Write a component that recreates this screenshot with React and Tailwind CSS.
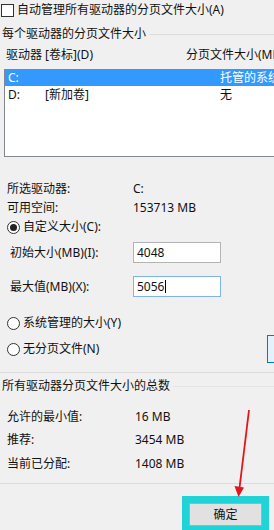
export default function App() {
  const Radio = ({ on }) => (
    <span className="flex h-[13px] w-[13px] shrink-0 items-center justify-center rounded-full border border-[#333] bg-white">
      {on && <span className="h-[7px] w-[7px] rounded-full bg-[#222]" />}
    </span>
  );
  return (
    <div className="relative h-[530px] w-[274px] overflow-hidden bg-[#f0f0f0] text-[12px] leading-none text-[#111] font-[family-name:'Noto_Sans',_'Noto_Sans_CJK_SC',_sans-serif]">
      {/* checkbox row */}
      <div className="flex h-[20px] items-center pl-[1px]">
        <span className="h-[13px] w-[13px] shrink-0 border border-[#333] bg-white" />
        <span className="ml-[3px] whitespace-nowrap">自动管理所有驱动器的分页文件大小(A)</span>
      </div>
      {/* group heading */}
      <div className="mt-[4px] flex h-[20px] items-center pl-[2px]">
        <span className="whitespace-nowrap">每个驱动器的分页文件大小</span>
        <span className="ml-[3px] h-px flex-1 bg-[#dcdcdc]" />
      </div>
      {/* column headers */}
      <div className="mt-[1px] flex h-[20px] items-center whitespace-nowrap">
        <span className="w-[186px] shrink-0 pl-[6px]">驱动器 [卷标](D)</span>
        <span className="shrink-0">分页文件大小(MB)</span>
      </div>
      {/* list box */}
      <div className="ml-[4px] mt-[4px] h-[88px] w-[300px] border border-[#828790] bg-white">
        <div className="flex h-[16px] items-center whitespace-nowrap bg-[#3399ff] text-white">
          <span className="w-[215px] shrink-0 pl-[3px]">C:</span>
          <span>托管的系统</span>
        </div>
        <div className="flex h-[17px] items-center whitespace-nowrap">
          <span className="w-[40px] shrink-0 pl-[3px]">D:</span>
          <span className="w-[175px] shrink-0">[新加卷]</span>
          <span>无</span>
        </div>
      </div>
      {/* info */}
      <div className="mt-[22px] flex h-[19px] items-center whitespace-nowrap">
        <span className="w-[133px] shrink-0 pl-[7px]">所选驱动器:</span>
        <span>C:</span>
      </div>
      <div className="flex h-[19px] items-center whitespace-nowrap">
        <span className="w-[133px] shrink-0 pl-[7px]">可用空间:</span>
        <span>153713 MB</span>
      </div>
      <div className="flex h-[20px] items-center gap-[3px] whitespace-nowrap pl-[7px]">
        <Radio on />
        <span>自定义大小(C):</span>
      </div>
      <div className="mt-[5px] flex h-[21px] items-center whitespace-nowrap">
        <span className="w-[133px] shrink-0 pl-[10px]">初始大小(MB)(I):</span>
        <div className="flex h-[21px] w-[88px] items-center border border-[#b4b4b4] bg-white pl-[3px]">4048</div>
      </div>
      <div className="mt-[13px] flex h-[21px] items-center whitespace-nowrap">
        <span className="w-[133px] shrink-0 pl-[10px]">最大值(MB)(X):</span>
        <div className="flex h-[21px] w-[88px] items-center border border-[#7eb4ea] bg-white pl-[3px]">
          5056<span className="ml-px h-[13px] w-px bg-black" />
        </div>
      </div>
      <div className="mt-[16px] flex h-[20px] items-center gap-[3px] whitespace-nowrap pl-[7px]">
        <Radio />
        <span>系统管理的大小(Y)</span>
      </div>
      <div className="mt-[2px] flex h-[28px] items-center whitespace-nowrap">
        <div className="flex w-[267px] shrink-0 items-center gap-[3px] pl-[7px]">
          <Radio />
          <span>无分页文件(N)</span>
        </div>
        <div className="h-[28px] w-[75px] shrink-0 border border-[#0078d7] bg-[#e5f1fb]" />
      </div>
      <div className="mt-[9px] h-px w-full bg-[#dcdcdc]" />
      {/* group 2 */}
      <div className="mt-[3px] flex h-[20px] items-center pl-[2px]">
        <span className="whitespace-nowrap">所有驱动器分页文件大小的总数</span>
        <span className="ml-[3px] h-px flex-1 bg-[#e4e4e4]" />
      </div>
      <div className="mt-[9px] flex h-[23px] items-center whitespace-nowrap">
        <span className="w-[135px] shrink-0 pl-[7px]">允许的最小值:</span>
        <span>16 MB</span>
      </div>
      <div className="flex h-[24px] items-center whitespace-nowrap">
        <span className="w-[135px] shrink-0 pl-[7px]">推荐:</span>
        <span>3454 MB</span>
      </div>
      <div className="flex h-[23px] items-center whitespace-nowrap">
        <span className="w-[135px] shrink-0 pl-[7px]">当前已分配:</span>
        <span>1408 MB</span>
      </div>
      <div className="mt-[8px] h-px w-full bg-[#dcdcdc]" />
      {/* OK button with highlight */}
      <div className="ml-[182px] mt-[12px] h-[38px] w-[87px] border-[7px] border-[#1fd3d6] bg-[#1fd3d6]">
        <div className="flex h-[23px] w-full items-center justify-center border border-[#adadad] bg-[#e1e1e1]">确定</div>
      </div>
      {/* red arrow */}
      <svg className="absolute left-0 top-0" width="274" height="530" viewBox="0 0 274 530">
        <line x1="249" y1="410" x2="239.5" y2="488" stroke="#e3141b" strokeWidth="1.8" />
        <polygon points="234.5,486 244,487.5 238.5,497" fill="#e3141b" />
      </svg>
    </div>
  );
}
